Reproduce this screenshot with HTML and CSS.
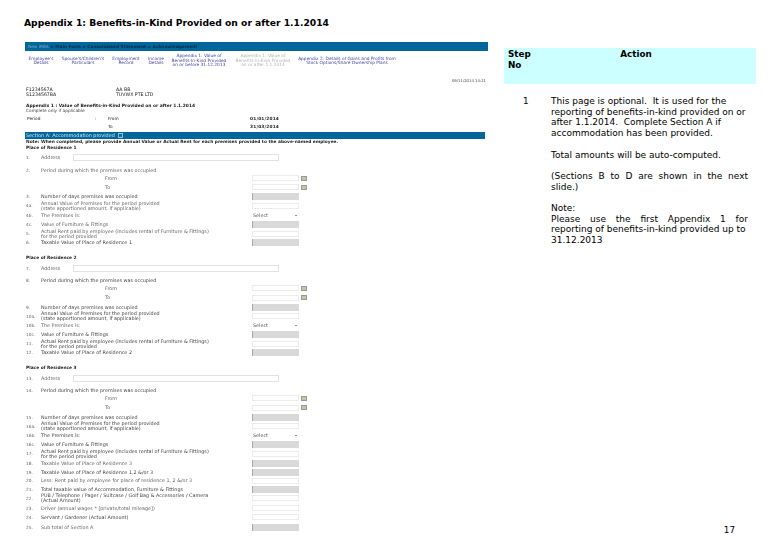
FILE: index.html
```html
<!DOCTYPE html>
<html lang="en">
<head>
<meta charset="utf-8">
<title>Appendix 1</title>
<link rel="stylesheet" href="styles.css">
</head>
<body>
<div class="slide">
  <div class="left">
    <h1 class="title">Appendix 1: Benefits-in-Kind Provided on or after 1.1.2014</h1>
    <div class="form">
      <div class="crumbs"><span class="crumb-dim">New IR8A</span> &gt; Main Form &gt; Consolidated Statement &gt; Acknowledgement</div>
      <nav class="nav">
        <span class="n1">Employee's<br>Details</span>
        <span class="n2">Spouse's/Children's<br>Particulars</span>
        <span class="n3">Employment<br>Record</span>
        <span class="n4">Income<br>Details</span>
        <span class="n5">Appendix 1: Value of<br>Benefits-In-Kind Provided<br>on or before 31.12.2013</span>
        <span class="n6">Appendix 1: Value of<br>Benefits-In-Kind Provided<br>on or after 1.1.2014</span>
        <span class="n7">Appendix 2: Details of Gains and Profits from<br>Stock Options/Share Ownership Plans</span>
      </nav>
      <div class="stamp">09/11/2014 14:21</div>
      <div class="ids"><span class="id-a">F1234567A</span><span>AA BB</span></div>
      <div class="ids"><span class="id-a">S1234567BA</span><span>TUVWX PTE LTD</span></div>
      <div class="app-title">Appendix 1 : Value of Benefits-in-Kind Provided on or after 1.1.2014</div>
      <div class="app-sub">Complete only if applicable</div>
      <div class="period"><span class="p-a">Period</span><span class="p-b">:</span><span class="p-c">From</span><span class="p-d">01/01/2014</span></div>
      <div class="period p2"><span class="p-a"></span><span class="p-b"></span><span class="p-c">To</span><span class="p-d">31/03/2014</span></div>
      <div class="section-bar">Section A: Accommodation provided <span class="info">i</span></div>
      <div class="note">Note: When completed, please provide Annual Value or Actual Rent for each premises provided to the above-named employee.</div>
      <div class="note second">Place of Residence 1</div>

      <div class="row h8 mt3"><span class="num">1.</span><span class="lab-a">Address</span><span class="addr"></span></div>
      <div class="row h8 mt5"><span class="num">2.</span><span class="lab">Period during which the premises was occupied</span></div>
      <div class="row h8"><span class="num"></span><span class="lab ctr">From</span><span class="fld in"></span><span class="cal"></span></div>
      <div class="row h10"><span class="num"></span><span class="lab ctr">To</span><span class="fld in"></span><span class="cal"></span></div>
      <div class="row h8"><span class="num">3.</span><span class="lab dark">Number of days premises was occupied</span><span class="fld gr"></span></div>
      <div class="row h11"><span class="num">4a.</span><span class="lab">Annual Value of Premises for the period provided<br>(state apportioned amount, if applicable)</span><span class="fld in"></span></div>
      <div class="row h8"><span class="num">4b.</span><span class="lab">The Premises is:</span><span class="fld sel">Select<i class="arrow"></i></span></div>
      <div class="row h10"><span class="num">4c.</span><span class="lab">Value of Furniture &amp; Fittings</span><span class="fld gr"></span></div>
      <div class="row h9"><span class="num">5.</span><span class="lab">Actual Rent paid by employee (includes rental of Furniture &amp; Fittings)<br>for the period provided</span><span class="fld in"></span></div>
      <div class="row h8"><span class="num">6.</span><span class="lab dark">Taxable Value of Place of Residence 1</span><span class="fld gr"></span></div>

      <div class="note place">Place of Residence 2</div>
      <div class="row h8 mt2"><span class="num">7.</span><span class="lab-a">Address</span><span class="addr"></span></div>
      <div class="row h8 mt4"><span class="num">8.</span><span class="lab dark">Period during which the premises was occupied</span></div>
      <div class="row h8"><span class="num"></span><span class="lab ctr">From</span><span class="fld in"></span><span class="cal"></span></div>
      <div class="row h11"><span class="num"></span><span class="lab ctr">To</span><span class="fld in"></span><span class="cal"></span></div>
      <div class="row h8"><span class="num">9.</span><span class="lab dark">Number of days premises was occupied</span><span class="fld gr"></span></div>
      <div class="row h10"><span class="num">10a.</span><span class="lab dark">Annual Value of Premises for the period provided<br>(state apportioned amount, if applicable)</span><span class="fld in"></span></div>
      <div class="row h8"><span class="num">10b.</span><span class="lab">The Premises is:</span><span class="fld sel">Select<i class="arrow"></i></span></div>
      <div class="row h10"><span class="num">10c.</span><span class="lab dark">Value of Furniture &amp; Fittings</span><span class="fld gr"></span></div>
      <div class="row h9"><span class="num">11.</span><span class="lab dark">Actual Rent paid by employee (includes rental of Furniture &amp; Fittings)<br>for the period provided</span><span class="fld in"></span></div>
      <div class="row h8"><span class="num">12.</span><span class="lab dark">Taxable Value of Place of Residence 2</span><span class="fld gr"></span></div>

      <div class="note place">Place of Residence 3</div>
      <div class="row h8 mt2"><span class="num">13.</span><span class="lab-a">Address</span><span class="addr"></span></div>
      <div class="row h8 mt4"><span class="num">14.</span><span class="lab dark">Period during which the premises was occupied</span></div>
      <div class="row h8"><span class="num"></span><span class="lab ctr">From</span><span class="fld in"></span><span class="cal"></span></div>
      <div class="row h11"><span class="num"></span><span class="lab ctr">To</span><span class="fld in"></span><span class="cal"></span></div>
      <div class="row h8"><span class="num">15.</span><span class="lab dark">Number of days premises was occupied</span><span class="fld gr"></span></div>
      <div class="row h10"><span class="num">16a.</span><span class="lab dark">Annual Value of Premises for the period provided<br>(state apportioned amount, if applicable)</span><span class="fld in"></span></div>
      <div class="row h8"><span class="num">16b.</span><span class="lab dark">The Premises is:</span><span class="fld sel">Select<i class="arrow"></i></span></div>
      <div class="row h10"><span class="num">16c.</span><span class="lab dark">Value of Furniture &amp; Fittings</span><span class="fld gr"></span></div>
      <div class="row h9"><span class="num">17.</span><span class="lab dark">Actual Rent paid by employee (includes rental of Furniture &amp; Fittings)<br>for the period provided</span><span class="fld in"></span></div>
      <div class="row h10"><span class="num">18.</span><span class="lab">Taxable Value of Place of Residence 3</span><span class="fld gr"></span></div>
      <div class="row h8"><span class="num">19.</span><span class="lab dark">Taxable Value of Place of Residence 1,2 &amp;/or 3</span><span class="fld gr"></span></div>
      <div class="row h9"><span class="num">20.</span><span class="lab">Less: Rent paid by employee for place of residence 1, 2 &amp;/or 3</span><span class="fld in"></span></div>
      <div class="row h8"><span class="num">21.</span><span class="lab dark">Total taxable value of Accommodation, Furniture &amp; Fittings</span><span class="fld gr"></span></div>
      <div class="row h10"><span class="num">22.</span><span class="lab dark">PUB / Telephone / Pager / Suitcase / Golf Bag &amp; Accessories / Camera<br>(Actual Amount)</span><span class="fld in"></span></div>
      <div class="row h10"><span class="num">23.</span><span class="lab">Driver (annual wages * [private/total mileage])</span><span class="fld in"></span></div>
      <div class="row h8"><span class="num">24.</span><span class="lab dark">Servant / Gardener (Actual Amount)</span><span class="fld in"></span></div>
      <div class="row h12"><span class="num">25.</span><span class="lab">Sub total of Section A</span><span class="fld gr"></span></div>
    </div>
  </div>
  <div class="right">
    <div class="head">
      <div class="head-step">Step<br>No</div>
      <div class="head-action">Action</div>
    </div>
    <div class="step">
      <div class="step-no">1</div>
      <div class="step-body">
        <p>This page is optional. &nbsp;It is used for the<br>reporting of benefits-in-kind provided on or<br>after 1.1.2014. &nbsp;Complete Section A if<br>accommodation has been provided.</p>
        <p>Total amounts will be auto-computed.</p>
        <p><span class="just">(Sections B to D are shown in the next</span>slide.)</p>
        <p>Note:<br><span class="just">Please use the first Appendix 1 for</span>reporting of benefits-in-kind provided up to<br>31.12.2013</p>
      </div>
    </div>
    <div class="page-no">17</div>
  </div>
</div>
</body>
</html>
```
FILE: styles.css
```css
* { box-sizing: border-box; }
html, body { margin: 0; padding: 0; background: #fff; }
body { font-family: "DejaVu Sans", Verdana, sans-serif; color: #000; }
.slide { display: flex; width: 780px; height: 540px; overflow: hidden; padding-left: 24px; }
.left { width: 464px; flex: none; }
.title { margin: 16px 0 0; height: 14px; font-size: 9.2px; line-height: 14px; font-weight: 700; white-space: nowrap; }
.form { margin-top: 12px; padding-left: 1px; filter: blur(.4px); font-size: 4.3px; line-height: 5px; color: #444; }
.crumbs { height: 9px; background: #00669c; color: #032a4a; font-weight: 700; line-height: 9px; padding-left: 3px; }
.crumb-dim { color: #7fa8c4; font-weight: 400; }
.nav { height: 14px; margin-top: 3px; display: flex; align-items: center; color: #44449c; text-align: center; line-height: 4.5px; font-size: 4.35px; }
.nav span { flex: none; white-space: nowrap; }
.n1 { width: 30px; margin-left: 1px; }
.n2 { width: 44px; margin-left: 5px; }
.n3 { width: 30px; margin-left: 6px; }
.n4 { width: 20px; margin-left: 5px; }
.n5 { width: 56px; margin-left: 5px; }
.n6 { width: 56px; margin-left: 8px; color: #b4b4b4; }
.n7 { width: 100px; margin-left: 6px; }
.stamp { height: 5px; margin-top: 10px; padding-right: 2px; text-align: right; font-size: 3.8px; }
.ids { display: flex; height: 5px; color: #222; font-size: 4.7px; }
.stamp + .ids { margin-top: 4px; }
.id-a { width: 91px; padding-left: 1px; }
.app-title { margin-top: 6px; height: 5px; padding-left: 1px; font-weight: 700; font-size: 4.4px; color: #222; white-space: nowrap; }
.app-sub { height: 5px; padding-left: 1px; }
.period { display: flex; height: 8px; margin-top: 2px; line-height: 8px; color: #222; }
.p2 { margin-top: 0; }
.p-a { width: 70px; padding-left: 2px; }
.p-b { width: 13px; }
.p-c { width: 142px; }
.p-d { font-weight: 700; letter-spacing: .2px; }
.section-bar { height: 7px; margin-top: 1px; width: 460px; background: #00669c; color: #cfe6f2; font-size: 4.9px; line-height: 7px; padding-left: 1px; }
.info { display: inline-block; width: 5px; height: 5px; border: .5px solid #8fc0da; color: #8fc0da; line-height: 4px; text-align: center; font-size: 3px; margin-left: 2px; }
.note { height: 5px; padding-left: 1px; color: #222; font-weight: 700; font-size: 4.35px; white-space: nowrap; }
.second { margin-top: 1px; }
.place { margin-top: 8px; height: 8px; line-height: 8px; }
.row { display: flex; align-items: center; white-space: nowrap; }
.h8 { height: 8px; }
.h9 { height: 9px; }
.h10 { height: 10px; }
.h11 { height: 11px; }
.h12 { height: 12px; }
.mt2 { margin-top: 2px; }
.mt3 { margin-top: 3px; }
.mt4 { margin-top: 4px; }
.mt5 { margin-top: 5px; }
.num { width: 16px; flex: none; padding-left: 1px; color: #666; }
.lab { width: 211px; flex: none; font-size: 4.85px; color: #666; line-height: 5px; }
.lab.dark { color: #444; }
.lab.ctr { padding-left: 64px; }
.lab-a { width: 32px; flex: none; font-size: 4.85px; color: #666; }
.addr { width: 206px; height: 7px; border: 1px solid #e2e2e2; }
.fld { width: 47px; height: 6px; flex: none; }
.in { border: 1px solid #ececec; }
.gr { height: 7px; background: #d9d9d9; border-left: 1px solid #a8a8a8; }
.sel { display: flex; align-items: center; justify-content: space-between; padding: 0 2px 0 1px; color: #555; font-size: 4.85px; }
.arrow { width: 0; height: 0; border: 1px solid transparent; border-top: 1.5px solid #333; border-bottom: 0; }
.cal { width: 6px; height: 5px; margin-left: 2px; background: #c8c4a0; border: .5px solid #999; }
.right { flex: none; width: 252px; margin-left: 16px; display: flex; flex-direction: column; font-size: 8.8px; line-height: 10.7px; }
.head { display: flex; height: 36px; margin-top: 48px; padding-top: 1px; background: #ccffff; font-weight: 700; }
.head-step { width: 47px; padding-left: 4px; }
.head-action { width: 166px; margin-left: 2px; text-align: center; }
.step { display: flex; margin-top: 12px; font-size: 9px; }
.step-no { width: 47px; padding-left: 19px; font-size: 8.8px; }
.step-body { width: 197px; }
.step-body p { margin: 0 0 10.7px; white-space: nowrap; }
.just { display: block; text-align: justify; text-align-last: justify; white-space: normal; }
.page-no { margin-top: auto; padding-bottom: 4px; padding-right: 21px; text-align: right; }
```
